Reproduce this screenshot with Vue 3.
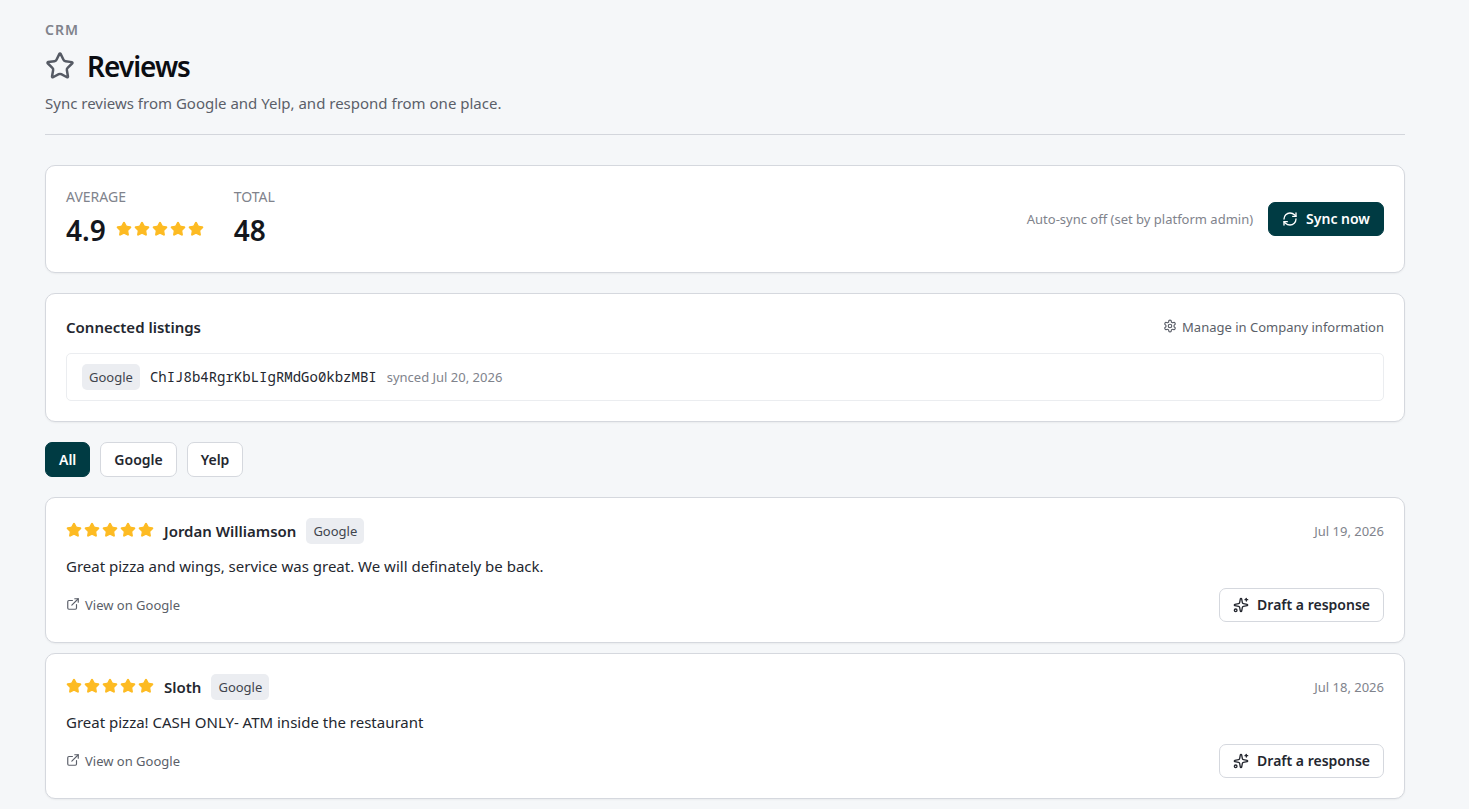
<template>
  <main class="page">
    <header class="page-header">
      <p class="eyebrow">CRM</p>
      <h1>
        <svg class="icon title-icon" viewBox="0 0 24 24" aria-hidden="true">
          <path :d="starPath" />
        </svg>
        Reviews
      </h1>
      <p class="subtitle">Sync reviews from Google and Yelp, and respond from one place.</p>
    </header>

    <section class="card summary">
      <div class="stats">
        <div>
          <p class="stat-label">AVERAGE</p>
          <div class="stat-value">
            4.9
            <span class="stars">
              <svg v-for="n in 5" :key="n" viewBox="0 0 24 24" aria-hidden="true">
                <path :d="starPath" />
              </svg>
            </span>
          </div>
        </div>
        <div>
          <p class="stat-label">TOTAL</p>
          <div class="stat-value">48</div>
        </div>
      </div>
      <div class="sync">
        <span class="muted">Auto-sync off (set by platform admin)</span>
        <button type="button" class="btn primary">
          <svg class="icon" viewBox="0 0 24 24" aria-hidden="true">
            <path d="M3 12a9 9 0 0 1 9-9 9.75 9.75 0 0 1 6.74 2.74L21 8" />
            <path d="M21 3v5h-5" />
            <path d="M21 12a9 9 0 0 1-9 9 9.75 9.75 0 0 1-6.74-2.74L3 16" />
            <path d="M8 16H3v5" />
          </svg>
          Sync now
        </button>
      </div>
    </section>

    <section class="card listings">
      <div class="row">
        <h2>Connected listings</h2>
        <a href="#" class="link">
          <svg class="icon" viewBox="0 0 24 24" aria-hidden="true">
            <path d="M12.22 2h-.44a2 2 0 0 0-2 2v.18a2 2 0 0 1-1 1.73l-.43.25a2 2 0 0 1-2 0l-.15-.08a2 2 0 0 0-2.73.73l-.22.38a2 2 0 0 0 .73 2.73l.15.1a2 2 0 0 1 1 1.72v.51a2 2 0 0 1-1 1.74l-.15.09a2 2 0 0 0-.73 2.73l.22.38a2 2 0 0 0 2.73.73l.15-.08a2 2 0 0 1 2 0l.43.25a2 2 0 0 1 1 1.73V20a2 2 0 0 0 2 2h.44a2 2 0 0 0 2-2v-.18a2 2 0 0 1 1-1.73l.43-.25a2 2 0 0 1 2 0l.15.08a2 2 0 0 0 2.73-.73l.22-.39a2 2 0 0 0-.73-2.73l-.15-.08a2 2 0 0 1-1-1.74v-.5a2 2 0 0 1 1-1.74l.15-.09a2 2 0 0 0 .73-2.73l-.22-.38a2 2 0 0 0-2.73-.73l-.15.08a2 2 0 0 1-2 0l-.43-.25a2 2 0 0 1-1-1.73V4a2 2 0 0 0-2-2z" />
            <circle cx="12" cy="12" r="3" />
          </svg>
          Manage in Company information
        </a>
      </div>
      <div class="listing">
        <span class="badge">Google</span>
        <code>ChIJ8b4RgrKbLIgRMdGo0kbzMBI</code>
        <span class="muted">synced Jul 20, 2026</span>
      </div>
    </section>

    <nav class="filters" aria-label="Review source">
      <button
        v-for="source in sources"
        :key="source"
        type="button"
        class="btn"
        :class="{ primary: source === active }"
        @click="active = source"
      >{{ source }}</button>
    </nav>

    <section class="reviews">
      <article v-for="review in visibleReviews" :key="review.id" class="card review">
        <div class="row">
          <div class="author">
            <span class="stars">
              <svg v-for="n in review.rating" :key="n" viewBox="0 0 24 24" aria-hidden="true">
                <path :d="starPath" />
              </svg>
            </span>
            <strong>{{ review.name }}</strong>
            <span class="badge">{{ review.source }}</span>
          </div>
          <time class="muted">{{ review.date }}</time>
        </div>
        <p class="body">{{ review.text }}</p>
        <div class="row">
          <a href="#" class="link">
            <svg class="icon" viewBox="0 0 24 24" aria-hidden="true">
              <path d="M15 3h6v6" />
              <path d="M10 14 21 3" />
              <path d="M18 13v6a2 2 0 0 1-2 2H5a2 2 0 0 1-2-2V8a2 2 0 0 1 2-2h6" />
            </svg>
            View on {{ review.source }}
          </a>
          <button type="button" class="btn">
            <svg class="icon" viewBox="0 0 24 24" aria-hidden="true">
              <path d="M11.017 2.814a1 1 0 0 1 1.966 0l1.051 5.558a2 2 0 0 0 1.594 1.594l5.558 1.051a1 1 0 0 1 0 1.966l-5.558 1.051a2 2 0 0 0-1.594 1.594l-1.051 5.558a1 1 0 0 1-1.966 0l-1.051-5.558a2 2 0 0 0-1.594-1.594l-5.558-1.051a1 1 0 0 1 0-1.966l5.558-1.051a2 2 0 0 0 1.594-1.594z" />
              <path d="M20 2v4" />
              <path d="M22 4h-4" />
              <circle cx="4" cy="20" r="2" />
            </svg>
            Draft a response
          </button>
        </div>
      </article>
    </section>
  </main>
</template>

<script setup>
import { computed, ref } from 'vue'

const starPath = 'M11.525 2.295a.53.53 0 0 1 .95 0l2.31 4.679a2.123 2.123 0 0 0 1.595 1.16l5.166.756a.53.53 0 0 1 .294.904l-3.736 3.638a2.123 2.123 0 0 0-.611 1.878l.882 5.14a.53.53 0 0 1-.771.56l-4.618-2.428a2.122 2.122 0 0 0-1.973 0L6.396 21.01a.53.53 0 0 1-.77-.56l.881-5.139a2.122 2.122 0 0 0-.611-1.879L2.16 9.795a.53.53 0 0 1 .294-.906l5.165-.755a2.122 2.122 0 0 0 1.597-1.16z'

const sources = ['All', 'Google', 'Yelp']
const active = ref('All')

const reviews = [
  { id: 1, name: 'Jordan Williamson', source: 'Google', rating: 5, date: 'Jul 19, 2026', text: 'Great pizza and wings, service was great. We will definately be back.' },
  { id: 2, name: 'Sloth', source: 'Google', rating: 5, date: 'Jul 18, 2026', text: 'Great pizza! CASH ONLY- ATM inside the restaurant' }
]

const visibleReviews = computed(() =>
  active.value === 'All' ? reviews : reviews.filter(r => r.source === active.value)
)
</script>

<style>
body {
  margin: 0;
  background: #f5f7f9;
}
</style>

<style scoped>
.page {
  box-sizing: border-box;
  padding: 20px 64px 8px 45px;
  font-family: "Segoe UI", "Noto Sans", "Open Sans", sans-serif;
  font-size: 15px;
  line-height: 24px;
  color: #24272f;
}

p, h1, h2 { margin: 0; }

.icon {
  flex: none;
  width: 16px;
  height: 16px;
  fill: none;
  stroke: currentColor;
  stroke-width: 2;
  stroke-linecap: round;
  stroke-linejoin: round;
}

/* Header */
.page-header {
  padding-bottom: 19px;
  margin-bottom: 30px;
  border-bottom: 1px solid #d3d6dc;
}

.eyebrow {
  font-size: 14px;
  line-height: 20px;
  font-weight: 600;
  letter-spacing: 1px;
  color: #80838c;
}

h1 {
  display: flex;
  align-items: center;
  gap: 12px;
  margin: 6px 0 5px;
  font-size: 28px;
  line-height: 40px;
  font-weight: 600;
  letter-spacing: -1px;
  color: #0b0d12;
}

.title-icon {
  width: 30px;
  height: 30px;
  color: #555a64;
}

.subtitle { color: #5b5f69; }

/* Cards */
.card {
  padding: 20px;
  background: #fff;
  border: 1px solid #d5d8de;
  border-radius: 10px;
  box-shadow: 0 1px 2px rgba(0, 0, 0, 0.05);
}

.row {
  display: flex;
  align-items: center;
  justify-content: space-between;
}

.muted {
  font-size: 13px;
  color: #80838c;
}

.summary {
  display: flex;
  align-items: center;
  justify-content: space-between;
  margin-bottom: 20px;
}

.stats {
  display: flex;
  gap: 30px;
}

.stat-label {
  font-size: 14px;
  line-height: 22px;
  color: #80838c;
}

.stat-value {
  display: flex;
  align-items: center;
  gap: 10px;
  font-size: 28px;
  line-height: 44px;
  font-weight: 600;
  color: #14171d;
}

.stars {
  display: flex;
  gap: 2px;
  padding-bottom: 2px;
}

.stars svg {
  width: 16px;
  height: 16px;
  overflow: visible;
  fill: #fdbb23;
  stroke: #fdbb23;
  stroke-width: 2;
  stroke-linejoin: round;
}

.sync {
  display: flex;
  align-items: center;
  gap: 15px;
}

.btn {
  display: inline-flex;
  align-items: center;
  gap: 8px;
  padding: 5px 13px;
  border: 1px solid #d5d8de;
  border-radius: 7px;
  background: #fff;
  font-family: inherit;
  font-size: 14px;
  line-height: 22px;
  font-weight: 600;
  color: #24272f;
  cursor: pointer;
}

.btn.primary {
  background: #003b43;
  border-color: #003b43;
  color: #fff;
}

/* Listings */
h2 {
  font-size: 15px;
  line-height: 26px;
  font-weight: 600;
}

.link {
  display: inline-flex;
  align-items: center;
  gap: 5px;
  font-size: 13px;
  color: #5b5f69;
  text-decoration: none;
}

.link .icon {
  width: 14px;
  height: 14px;
  padding-bottom: 2px;
}

.listing {
  display: flex;
  align-items: center;
  gap: 10px;
  margin-top: 13px;
  padding: 10px 15px;
  border: 1px solid #ebedf0;
  border-radius: 5px;
}

.badge {
  padding: 1px 7px;
  border-radius: 5px;
  background: #ebedf1;
  font-size: 13px;
  color: #41454e;
}

code {
  font-family: Consolas, "Noto Sans Mono", "DejaVu Sans Mono", monospace;
  font-size: 14px;
}

.filters {
  display: flex;
  gap: 10px;
  margin: 20px 0;
}

.filters .btn { line-height: 23px; }

/* Reviews */
.reviews {
  display: flex;
  flex-direction: column;
  gap: 10px;
}

.author {
  display: flex;
  align-items: center;
  gap: 10px;
}

.author strong { font-weight: 600; }

.body { margin: 10px 0; }
</style>
